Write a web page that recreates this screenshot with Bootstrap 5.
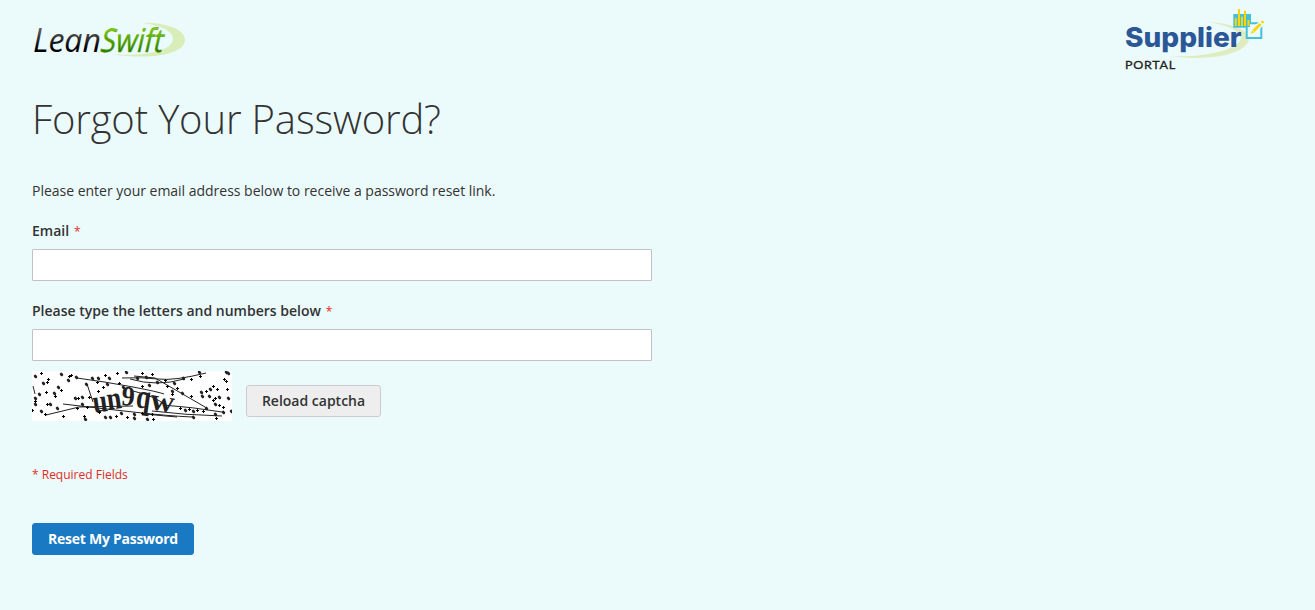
<!DOCTYPE html>
<html lang="en">
<head>
<meta charset="utf-8">
<meta name="viewport" content="width=device-width, initial-scale=1">
<title>Forgot Your Password?</title>
<link href="https://cdn.jsdelivr.net/npm/bootstrap@5.3.0/dist/css/bootstrap.min.css" rel="stylesheet">
<style>
body{background:#ebfafb;color:#333;font:400 14px/20px "Open Sans",sans-serif;overflow:hidden}
.page{padding:0 32px}
.brandbar{height:81px;padding-right:10px}
.brandbar svg{display:block}
h1.title{font-size:40px;font-weight:300;line-height:44px;letter-spacing:-.14px;margin:16px 0 40px}
.note{margin-bottom:20px;letter-spacing:-.015px}
.panel{width:620px}
.panel .form-label{font-weight:600;margin:0 0 8px;display:block;line-height:20px;height:20px}
.panel .form-label.second{margin-top:20px}
.star{color:#e02b27;font-size:12px;font-weight:400;line-height:1;margin-left:5px}
.panel .form-control{height:32px;border:1px solid #c2c2c2;border-radius:1px;padding:0 9px;font-size:14px}
.captcha-row{margin-top:10px}
.reload{background:#eee;border:1px solid #ccc;border-radius:3px;color:#333;font-size:14px;font-weight:600;line-height:16px;padding:7px 0;height:32px;width:135px;margin:14px 0 0 14px;white-space:nowrap}
.required{color:#e02b27;font-size:12px;line-height:17px;margin:45px 0 40px}
.reset{background:#1979c3;border:1px solid #1979c3;border-radius:3px;color:#fff;font-size:14px;font-weight:700;line-height:16px;letter-spacing:-.26px;padding:7px 0;width:162px;height:32px}
</style>
</head>
<body>
<div class="page">
  <header class="brandbar d-flex justify-content-between">
    <svg width="160" height="70" viewBox="32 0 160 70" role="img" aria-label="LeanSwift">
      <defs>
        <linearGradient id="ink" x1="0" y1="0" x2="0" y2="1"><stop offset=".25" stop-color="#666"/><stop offset=".7" stop-color="#000"/></linearGradient>
        <linearGradient id="leaf" x1="0" y1="0" x2="0" y2="1"><stop offset=".25" stop-color="#7fd000"/><stop offset=".75" stop-color="#2f8000"/></linearGradient>
      </defs>
      <path d="M142 23C166 22 185 29 185 40C185 53 154 61 111 54C143 57 171 51 173 40C174 31 160 25 142 23Z" fill="#d9edb9"/>
      <g font-family="Open Sans" font-size="32.500">
        <text x="33" y="51.500" font-style="italic" fill="url(#ink)" textLength="68" lengthAdjust="spacingAndGlyphs">Lean</text>
        <text transform="translate(99 51.500) skewX(-13)" fill="url(#leaf)" stroke="#4a9c00" stroke-width=".4" textLength="62.500" lengthAdjust="spacingAndGlyphs">Swift</text>
      </g>
    </svg>
    <svg width="150" height="76" viewBox="1123 0 150 76" role="img" aria-label="Supplier Portal">
      <path d="M1207 22C1231 23 1249 30 1249 38C1249 53 1213 62 1169 56C1204 58 1239 50 1241 38C1242 30 1222 24 1207 22Z" fill="#dfecc0"/>
      <text x="1125" y="46.500" font-family="Inter" font-weight="800" font-size="27" fill="#2b5797" textLength="116.500" lengthAdjust="spacingAndGlyphs">Supplier</text>
      <text x="1125" y="69" font-family="Lato" font-weight="400" font-size="11.800" fill="#222" stroke="#222" stroke-width=".3" textLength="51" lengthAdjust="spacingAndGlyphs" letter-spacing=".7">PORTAL</text>
      <path d="M1233.300 14H1251V27.700H1233.300Z" fill="#46bfd8"/>
      <path d="M1246.700 23.300H1261.300V38H1246.700Z" fill="#ebfafb" stroke="#46bfd8" stroke-width="2"/>
      <path d="M1244.500 22.500H1250V27H1245Z" fill="#46bfd8"/>
      <path d="M1235.800 26V18.300M1239 26V9M1242 26V16.700M1245 26V10.700M1248.500 26V20" stroke="#ffd500" stroke-width="2"/>
      <path d="M1254 31L1264 20.500" stroke="#ebfafb" stroke-width="5.500"/>
      <path d="M1253.500 31L1260.600 24M1261.800 22.800L1263.300 21.300" stroke="#ffd500" stroke-width="3"/>
      <path d="M1250.800 33.700L1252.100 30.200L1254.300 32.400Z" fill="#ffd500"/>
    </svg>
  </header>
  <main>
    <h1 class="title">Forgot Your Password?</h1>
    <form class="panel">
      <p class="note">Please enter your email address below to receive a password reset link.</p>
      <label class="form-label" for="email">Email<span class="star">*</span></label>
      <input class="form-control" id="email" type="email">
      <label class="form-label second" for="captcha">Please type the letters and numbers below<span class="star">*</span></label>
      <input class="form-control" id="captcha" type="text">
      <div class="captcha-row d-flex align-items-start">
        <svg id="noise" width="200" height="50" viewBox="0 0 200 50" role="img" aria-label="Captcha">
          <rect width="200" height="50" fill="#fff"/>
          <g font-family="Liberation Serif" font-weight="bold" font-size="31" fill="#222">
            <text transform="translate(62 42) rotate(-8) scale(.85 1.050)">u</text>
            <text transform="translate(76 39) rotate(-8) scale(.85 1.050)">n</text>
            <text transform="translate(89 34) rotate(4) scale(.85 .9)">9</text>
            <text transform="translate(103 36) rotate(8) scale(.85 1.100)">q</text>
            <text transform="translate(117 38) rotate(9) scale(1.080 1)">w</text>
          </g>
          <g fill="none" stroke="#222">
            <path d="M45 7Q75 11 101 16T132 23"/><path d="M90 7Q110 6 126 8T174 2"/><path d="M98 8Q125 16 152 8"/>
            <path d="M102 5L123 7L173 36"/><path d="M31 33Q65 37 101 41T160 46"/><path d="M14 44L47 36L101 35"/>
            <path d="M112 43L145 46"/><path d="M131 34Q160 36 190 41"/><path d="M120 40Q153 44 190 45"/>
            <path d="M1 15L3 23"/><path d="M55 13L61 31"/><path d="M101 20Q123 25 133 34"/>
          </g>
          <path id="specks" stroke="#222" stroke-width="2.800" stroke-linecap="round"/>
          <path id="crosses" stroke="#000" stroke-width="1" fill="none"/>
        </svg>
        <button class="btn reload" type="button">Reload captcha</button>
      </div>
      <p class="required">* Required Fields</p>
      <button class="btn reset d-block" type="button">Reset My Password</button>
    </form>
  </main>
</div>
<script src="https://cdn.jsdelivr.net/npm/bootstrap@5.3.0/dist/js/bootstrap.bundle.min.js"></script>
<script>
// Captcha noise, in thirds of a pixel
const left=[34,34,50,25,110,28,134,34,132,44,141,30,157,37,72,43,58,54,70,50,103,67,112,76,46,88,66,82,91,85,92,94,34,100,32,108,34,118,68,118,79,118,25,135,50,139,64,148,98,130,116,153,153,98,163,98,174,95,159,128,175,118,180,154,184,163,190,126,187,58,195,96,205,40,218,52,221,38,242,30,255,38,236,67,250,58,280,25,305,20,284,55,296,65,222,78,258,155,275,152,290,145,308,155,243,155,225,142];
const right=[22,38,35,25,48,35,66,26,58,60,35,62,82,52,104,45,125,78,141,70,155,83,183,92,160,40,182,42,208,22,210,32,287,20,283,43,293,25,288,49,212,80,228,78,215,92,248,62,240,72,262,72,238,94,254,98,266,95,250,105,295,100,292,72,256,116,268,120,228,128,280,126,304,138,218,138,256,148,257,158,188,155,150,130,165,135,178,133,188,138,200,135,12,148,36,145,52,163,68,163,12,160,66,146,278,140,110,62,131,54,127,88,53,90];
let dots='',plus='';
function scatter(list,dx){
  for(let i=0;i<list.length;i+=2){
    const x=Math.round(list[i]/3+dx),y=Math.round(list[i+1]/3-6);
    if(i%4) plus+=`M${x-1} ${y+.5}h3M${x+.5} ${y-1}v3`;
    else dots+=`M${x+.2} ${y}l.6 .8`;
  }
}
scatter(left,-8);scatter(right,98);
document.getElementById('specks').setAttribute('d',dots);
document.getElementById('crosses').setAttribute('d',plus);
</script>
</body>
</html>
